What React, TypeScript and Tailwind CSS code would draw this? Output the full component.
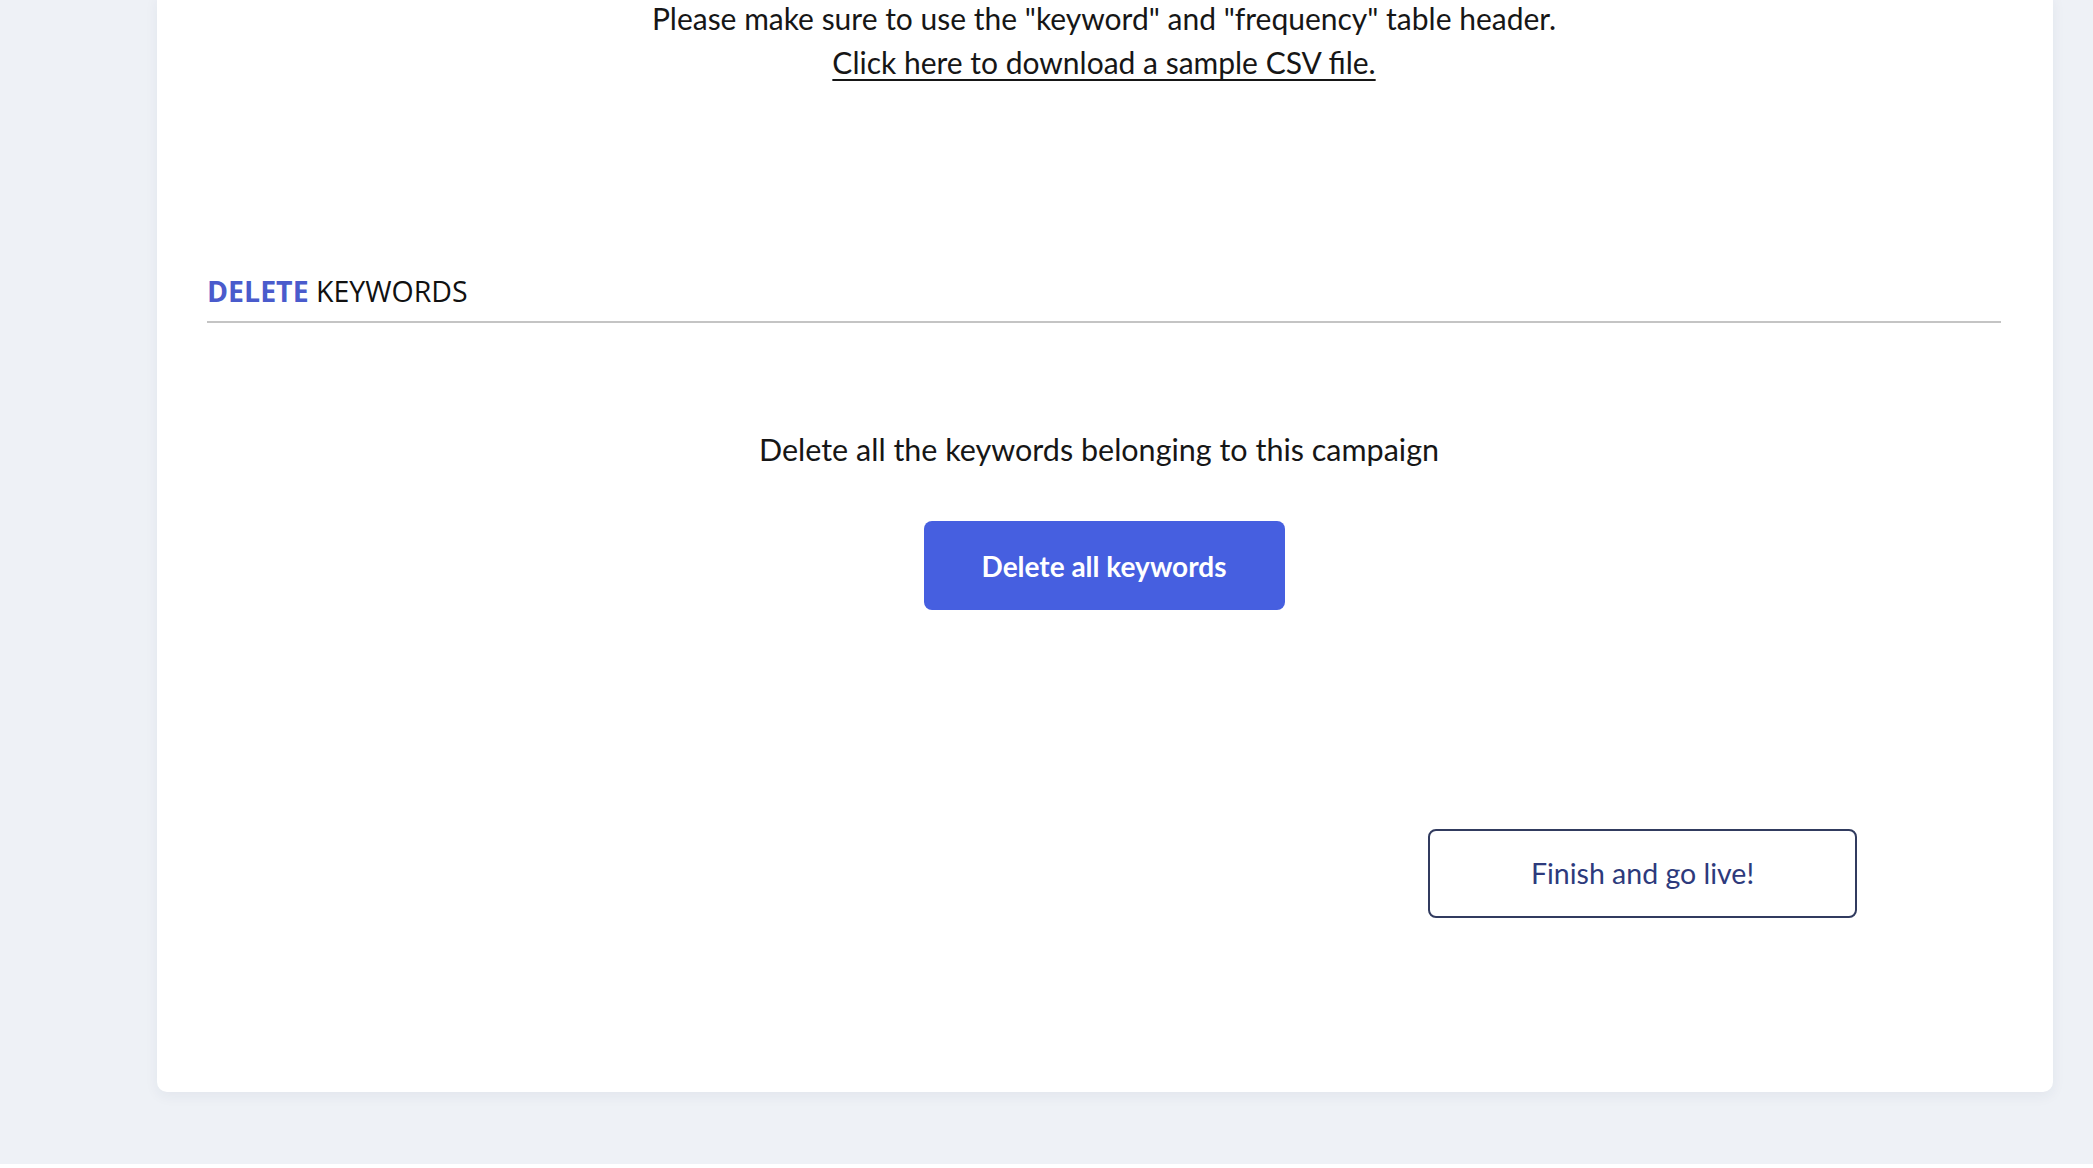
export default function App() {
  return (
    <div className="min-h-[1168px] bg-[#eef1f6] pl-[157px] pr-[40px]" style={{ fontFamily: 'Lato, "Noto Sans", sans-serif' }}>
      <div className="rounded-b-[10px] bg-white px-[52px] pl-[50px] pb-[174px] shadow-[0_4px_14px_rgba(30,50,90,0.06)]">
        <div className="-mt-[4px] text-center text-[30px] leading-[44px] text-[#161616]">
          <p>Please make sure to use the "keyword" and "frequency" table header.</p>
          <a href="#" className="underline underline-offset-[5px] decoration-[2px]">
            Click here to download a sample CSV file.
          </a>
        </div>

        <div className="mt-[187px] border-b-2 border-[#c4c4c4] pb-[10px]">
          <h2 className="text-[28.5px] leading-[40px] text-[#111]" style={{ fontFamily: '"Open Sans", sans-serif' }}>
            <span className="font-bold text-[#4a5bcc]">DELETE</span> KEYWORDS
          </h2>
        </div>

        <div className="mt-[108px] flex flex-col items-center">
          <p className="mr-[10px] text-[30.5px] leading-[36px] text-[#161616]">Delete all the keywords belonging to this campaign</p>
          <button className="mt-[54px] h-[89px] w-[361px] rounded-[8px] bg-[#465fe0] text-[28px] font-bold text-white">
            Delete all keywords
          </button>
        </div>

        <div className="mt-[219px] flex justify-end pr-[144px]">
          <button className="h-[89px] w-[429px] rounded-[8px] border-2 border-[#313b5f] bg-white text-[28.5px] text-[#2d3a7c]">
            Finish and go live!
          </button>
        </div>
      </div>
    </div>
  )
}
